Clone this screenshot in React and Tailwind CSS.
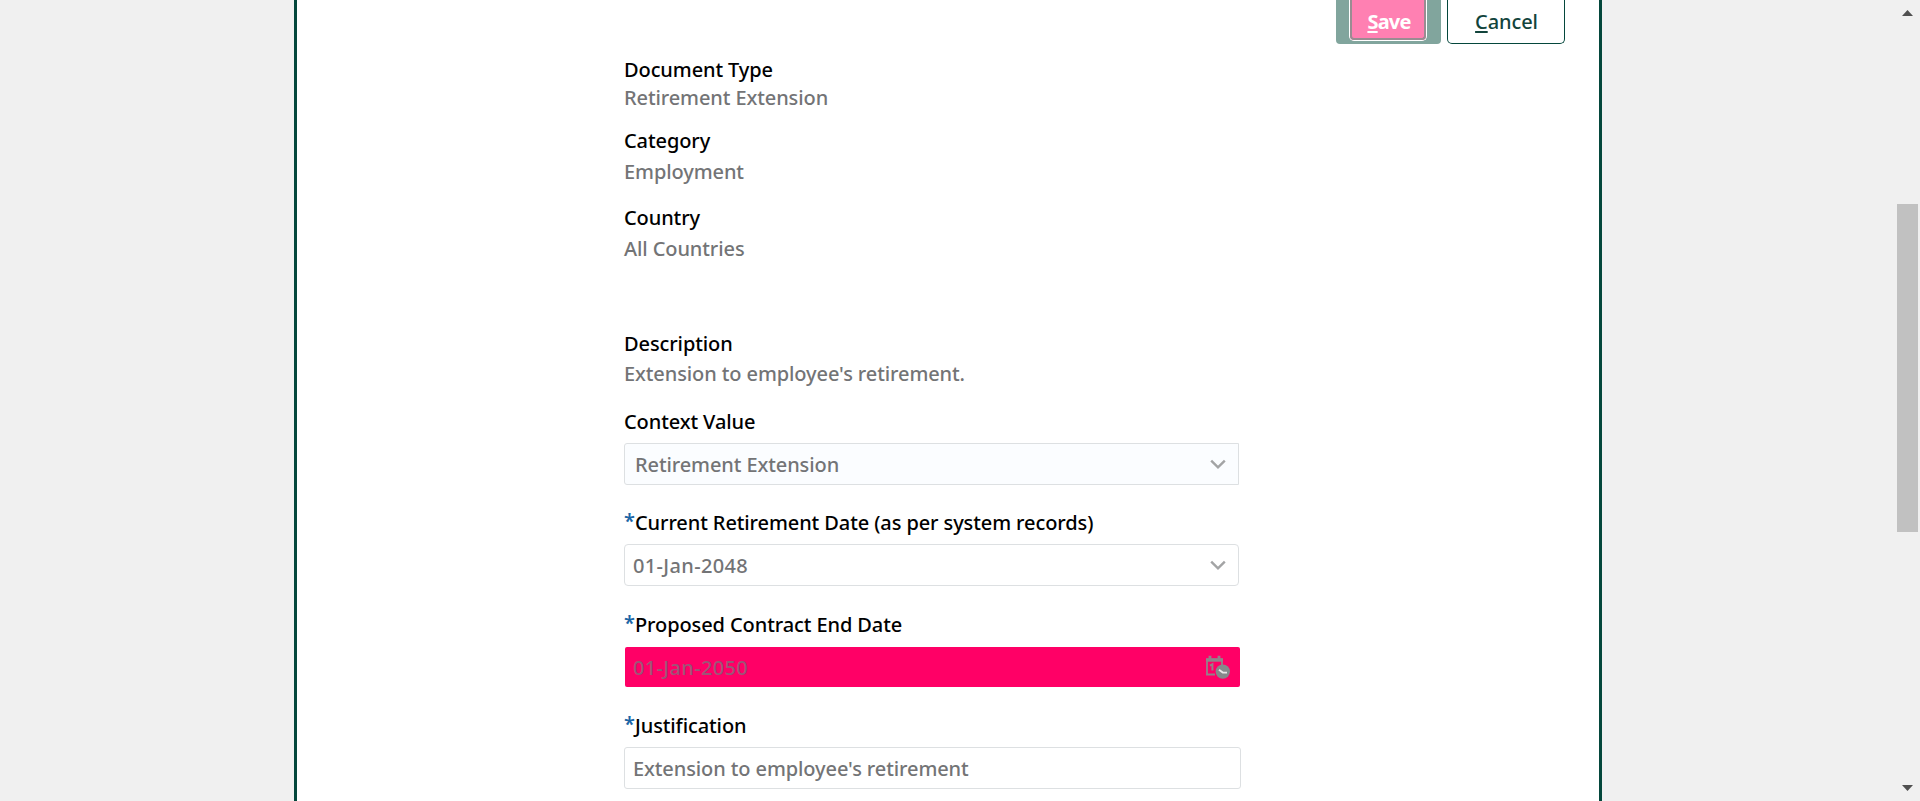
import React from "react";

const line = "block w-max whitespace-pre h-7 leading-7";

function Label({ className = "", required, children }) {
  return (
    <div className={`flex h-7 text-black ${className}`}>
      {required && <span className="-mt-0.5 w-[11px] text-[20px] font-semibold leading-7 text-[#1b65a6]">*</span>}
      <span className={line}>{children}</span>
    </div>
  );
}

function Value({ className = "", children }) {
  return <div className={`${line} text-[#737476] ${className}`}>{children}</div>;
}

function Chevron() {
  return (
    <svg className="mr-3 h-4 w-4" viewBox="0 0 16 16" fill="none" stroke="#a3a4a5" strokeWidth="2.4">
      <path d="M1.2 4.6 8 11.4 14.8 4.6" />
    </svg>
  );
}

function CalendarClock() {
  return (
    <svg className="mr-[10px] h-6 w-6" viewBox="0 0 24 24" fill="none">
      <path d="M1 20V4.5h15V10M0 19.5h9" stroke="#94808a" strokeWidth="1.8" />
      <path d="M0 5h17" stroke="#8f868b" strokeWidth="3.4" />
      <path d="M4 .8v4M13 .8v4" stroke="#94808a" strokeWidth="2.8" />
      <path d="M4 10.6 6.4 9.2V15.6" stroke="#94808a" strokeWidth="2" />
      <circle cx="16.8" cy="16.6" r="7.2" fill="#85898b" />
      <path d="M13 14.8 16.8 17.6h4.2" stroke="#e8e8e8" strokeWidth="1.9" />
    </svg>
  );
}

export default function App() {
  return (
    <div className="flex h-[801px] w-full overflow-hidden bg-[#f0f0f0] font-['Noto_Sans','Open_Sans',sans-serif] text-[20px] font-medium">
      <main className="ml-[294px] h-full w-[1308px] shrink-0 border-x-[3px] border-[#04473c] bg-white">
        <header className="flex h-11 justify-end gap-1.5 pr-[34px]">
          <div className="flex h-11 w-[105px] justify-center rounded-b bg-[#81a59d] pr-px">
            <button className="h-[41px] w-[78px] rounded-b-[5px] border border-t-0 border-white bg-[#ff80b2] font-bold tracking-[-0.8px] text-white">
              <span className="flex h-10 items-end justify-center rounded-b-[4px] border-2 border-t-0 border-[#9a8c92] pb-[2px] pl-0.5 leading-7">
                <span className="underline decoration-2 underline-offset-2">S</span>ave
              </span>
            </button>
          </div>
          <button className="flex h-11 w-[118px] items-end justify-center rounded-b-[5px] border border-t-0 border-[#04473c] pb-[7px] pl-px leading-7 tracking-[-0.1px] text-[#12443c]">
            <span className="underline decoration-2 underline-offset-2">C</span>ancel
          </button>
        </header>

        <section className="ml-[327px] flex w-[617px] flex-col pt-[12px] tracking-[-0.1px]">
          <Label>Document Type</Label>
          <Value>Retirement Extension</Value>
          <Label className="mt-[15px]">Category</Label>
          <Value className="mt-[3px]">Employment</Value>
          <Label className="mt-[18px]">Country</Label>
          <Value className="mt-[3px]">All Countries</Value>
          <Label className="mt-[67px]">Description</Label>
          <Value className="mt-[2px]">Extension to employee's retirement.</Value>
          <Label className="mt-5">Context Value</Label>
          <div className="mt-[7px] flex h-[42px] w-[615px] items-center justify-between rounded-l-[3px] border border-[#dde0e2] bg-[#fbfdff] pl-[10px]">
            <Value className="mt-0.5">Retirement Extension</Value>
            <Chevron />
          </div>
          <Label required className="mt-6">Current Retirement Date (as per system records)</Label>
          <div className="mt-[7px] flex h-[42px] w-[615px] items-center justify-between rounded-[4px] border border-[#dde0e2] pl-[8px]">
            <Value className="mt-0.5 tracking-[0.35px]">01-Jan-2048</Value>
            <Chevron />
          </div>
          <Label required className="mt-[25px]">Proposed Contract End Date</Label>
          <div className="ml-px mt-[8px] flex h-10 w-[615px] items-center justify-between rounded-[2px] bg-[#ff0066] pl-[8px]">
            <div className={`${line} mt-0.5 tracking-[0.35px] text-[#9c5577]`}>01-Jan-2050</div>
            <CalendarClock />
          </div>
          <Label required className="mt-[25px]">Justification</Label>
          <div className="mt-[7px] flex h-[42px] w-[617px] items-center rounded-[3px] border border-[#dde0e2] pl-[8px]">
            <Value className="mt-0.5">Extension to employee's retirement</Value>
          </div>
        </section>
      </main>
      <aside className="ml-auto flex h-full w-[23px] flex-col items-start">
        <svg className="ml-[5px] mt-[10px] h-[6px] w-[11px]" viewBox="0 0 11 6"><path d="M0 6 5.5 0 11 6Z" fill="#505050" /></svg>
        <div className="mt-[188px] h-[328px] w-[21px] bg-[#c1c1c1]" />
        <svg className="mb-[10px] ml-[5px] mt-auto h-[6px] w-[11px]" viewBox="0 0 11 6"><path d="M0 0 5.5 6 11 0Z" fill="#505050" /></svg>
      </aside>
    </div>
  );
}
